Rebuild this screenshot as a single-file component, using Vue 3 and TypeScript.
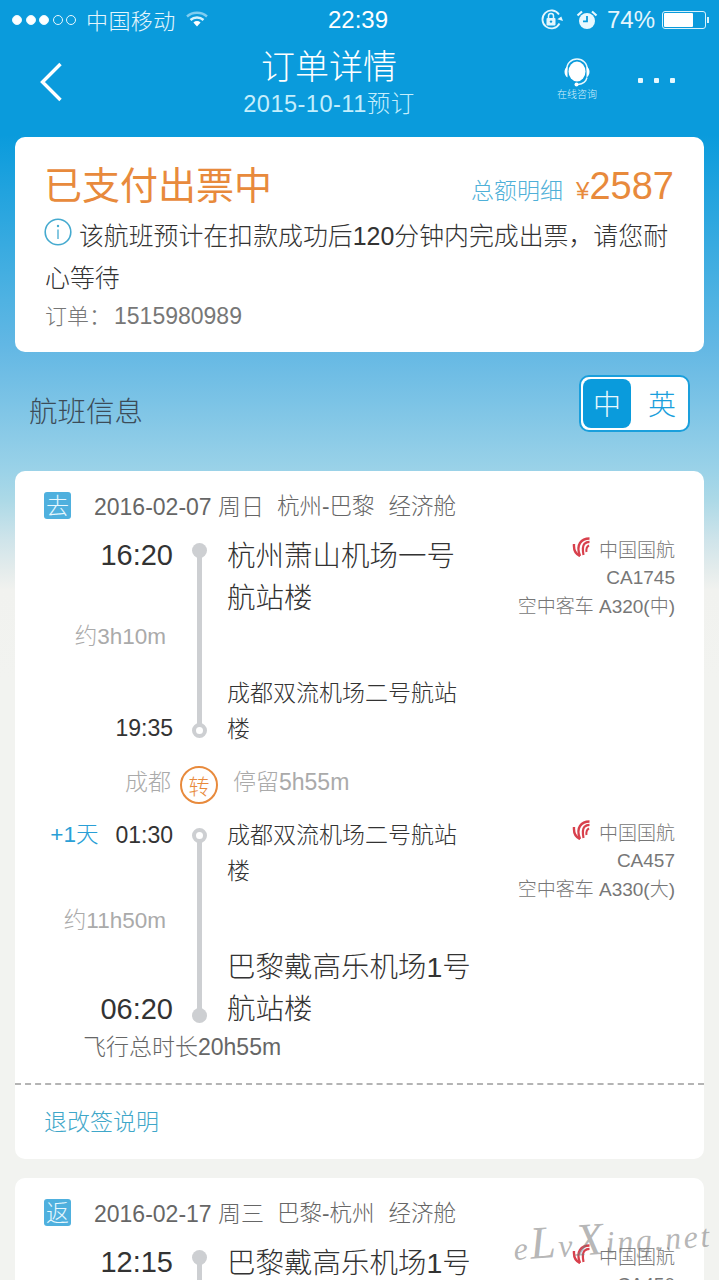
<script setup lang="ts">
interface Segment {
  kind: 'first' | 'second'
  dayShift?: string
  depart: string
  arrive: string
  duration: string
  from: string
  to: string
  flight: string
  plane: string
}
interface Trip {
  tag: string
  date: string
  week: string
  route: string
  cabin: string
  segments: Segment[]
}

const outbound: Trip = {
  tag: '去',
  date: '2016-02-07',
  week: '周日',
  route: '杭州-巴黎',
  cabin: '经济舱',
  segments: [
    {
      kind: 'first',
      depart: '16:20',
      arrive: '19:35',
      duration: '约3h10m',
      from: '杭州萧山机场一号航站楼',
      to: '成都双流机场二号航站楼',
      flight: 'CA1745',
      plane: '空中客车 A320(中)',
    },
    {
      kind: 'second',
      dayShift: '+1天',
      depart: '01:30',
      arrive: '06:20',
      duration: '约11h50m',
      from: '成都双流机场二号航站楼',
      to: '巴黎戴高乐机场1号航站楼',
      flight: 'CA457',
      plane: '空中客车 A330(大)',
    },
  ],
}
</script>

<template>
  <div class="page">
    <header class="top">
      <div class="status">
        <div class="signal">
          <i class="on"></i><i class="on"></i><i class="on"></i><i></i><i></i>
        </div>
        <span class="carrier">中国移动</span>
        <svg class="wifi" width="22" height="16" viewBox="0 0 22 16">
          <path d="M1 5.500C6.500 .5 15.500 .5 21 5.500" fill="none" stroke="#7fcdf0" stroke-width="2.400" />
          <path d="M4.500 9C8.200 5.600 13.800 5.600 17.500 9" fill="none" stroke="#d8f2fc" stroke-width="2.400" />
          <path d="M7.400 11.400C9.600 9.600 12.400 9.600 14.600 11.400L11 15.400Z" fill="#fff" />
        </svg>
        <span class="clock">22:39</span>
        <div class="status-right">
          <svg width="24" height="24" viewBox="0 0 24 24">
            <path d="M19.500 15.500A9 9 0 1 1 19 6.500" fill="none" stroke="#e4f6fd" stroke-width="1.800" />
            <path d="M17.500 12h6l-3-3.800z" fill="#e4f6fd" transform="rotate(18 20 11)" />
            <rect x="6.500" y="10" width="9" height="7.500" rx="1" fill="#e4f6fd" />
            <path d="M8.500 10V8a2.500 2.500 0 0 1 5 0v2" fill="none" stroke="#e4f6fd" stroke-width="1.500" />
            <circle cx="11" cy="13.600" r="1.200" fill="#0a9bdc" />
          </svg>
          <svg class="alarm" width="22" height="22" viewBox="0 0 22 22">
            <circle cx="11" cy="12" r="8" fill="#e8f8fe" />
            <path d="M11 7v5.400h-4" fill="none" stroke="#0a9bdc" stroke-width="1.800" />
            <path d="M1.500 6.500 6 2.500M20.500 6.500 16 2.500" stroke="#e8f8fe" stroke-width="2.200" />
          </svg>
          <span class="percent">74%</span>
          <div class="battery"><div class="battery-level"></div></div>
          <i class="battery-tip"></i>
        </div>
      </div>
      <nav class="nav">
        <svg class="back" width="26" height="42" viewBox="0 0 26 42">
          <path d="M21.500 3 3.500 21 21.500 39" fill="none" stroke="#fff" stroke-width="3.400" />
        </svg>
        <div class="titles">
          <h1>订单详情</h1>
          <p>2015-10-11预订</p>
        </div>
        <div class="consult">
          <svg width="32" height="30" viewBox="0 0 32 30">
            <path d="M5.500 12.500C5.500 5 10.500 1 16 1S26.500 5 26.500 12.500" fill="none" stroke="#e8f8fe" stroke-width="1.500" />
            <ellipse cx="16" cy="13.500" rx="8.500" ry="10" fill="#fff" />
            <path d="M6.500 8.500C2.500 10.500 2.500 17 6.500 19.500ZM25.500 8.500C29.500 10.500 29.500 17 25.500 19.500Z" fill="#fff" />
            <path d="M26 19.500C25 24 21 26 17 26.500" fill="none" stroke="#e8f8fe" stroke-width="1.400" />
            <circle cx="15.500" cy="26.500" r="2" fill="#fff" />
          </svg>
          <span>在线咨询</span>
        </div>
        <div class="more"><i></i><i></i><i></i></div>
      </nav>
    </header>

    <section class="card summary">
      <div class="summary-head">
        <h2>已支付出票中</h2>
        <a class="detail">总额明细</a>
        <span class="price"><small>¥</small>2587</span>
      </div>
      <p class="notice">
        <svg class="info" width="28" height="28" viewBox="0 0 28 28">
          <circle cx="14" cy="14" r="12.800" fill="none" stroke="#45aacf" stroke-width="1.600" />
          <circle cx="14" cy="8" r="1.200" fill="#45aacf" />
          <path d="M14 11.500V21" stroke="#45aacf" stroke-width="1.300" />
        </svg>
        该航班预计在扣款成功后120分钟内完成出票，请您耐心等待
      </p>
      <p class="order-no">订单：<span>1515980989</span></p>
    </section>

    <div class="section-head">
      <h3>航班信息</h3>
      <div class="lang">
        <span class="lang-on">中</span>
        <span class="lang-off">英</span>
      </div>
    </div>

    <section class="card trip">
      <div class="trip-head">
        <span class="tag">{{ outbound.tag }}</span>
        <span class="trip-date">{{ outbound.date }} {{ outbound.week }}</span>
        <span>{{ outbound.route }}</span>
        <span>{{ outbound.cabin }}</span>
      </div>

      <template v-for="(seg, i) in outbound.segments" :key="seg.flight">
        <div class="seg" :class="`seg-${seg.kind}`">
          <div class="times">
            <div class="time time-depart">
              <span v-if="seg.dayShift" class="shift">{{ seg.dayShift }}</span>{{ seg.depart }}
            </div>
            <div class="duration">{{ seg.duration }}</div>
            <div class="time time-arrive">{{ seg.arrive }}</div>
          </div>
          <div class="track">
            <i class="dot" :class="seg.kind === 'first' ? 'solid' : 'ring'"></i>
            <i class="line"></i>
            <i class="dot" :class="seg.kind === 'first' ? 'ring' : 'solid'"></i>
          </div>
          <div class="names">
            <div class="name name-from">{{ seg.from }}</div>
            <div class="name name-to">{{ seg.to }}</div>
          </div>
          <div class="airline">
            <div class="carrier-line">
              <svg width="18" height="20" viewBox="0 0 18 20">
                <path d="M2 7C1.500 13 3.500 17 8 19" fill="none" stroke="#d8404c" stroke-width="2.400" />
                <path d="M8 19C6 14 6 9 8 6 10 3 13 1.500 17.500 1.500" fill="none" stroke="#d8404c" stroke-width="2.400" />
                <path d="M11.500 18C10.500 13 10.500 9 12.500 6.800 13.800 5.400 15.500 4.800 17.500 4.800" fill="none" stroke="#d8404c" stroke-width="2.200" />
                <path d="M14.500 15C14 12 14.500 9.800 17 8.300" fill="none" stroke="#d8404c" stroke-width="2" />
              </svg>
              <span>中国国航</span>
            </div>
            <div>{{ seg.flight }}</div>
            <div>{{ seg.plane }}</div>
          </div>
        </div>
        <div v-if="i === 0" class="transfer">
          <span class="transfer-city">成都</span>
          <span class="transfer-mark">转</span>
          <span class="transfer-stay">停留5h55m</span>
        </div>
      </template>

      <div class="total">飞行总时长20h55m</div>
      <div class="rules">退改签说明</div>
    </section>

    <section class="card trip trip-return">
      <div class="trip-head">
        <span class="tag">返</span>
        <span class="trip-date">2016-02-17 周三</span>
        <span>巴黎-杭州</span>
        <span>经济舱</span>
      </div>
      <div class="seg seg-first">
        <div class="times">
          <div class="time time-depart">12:15</div>
        </div>
        <div class="track">
          <i class="dot solid"></i>
          <i class="line"></i>
        </div>
        <div class="names">
          <div class="name name-from">巴黎戴高乐机场1号航站楼</div>
        </div>
        <div class="airline">
          <div class="carrier-line">
            <svg width="18" height="20" viewBox="0 0 18 20">
              <path d="M2 7C1.500 13 3.500 17 8 19" fill="none" stroke="#d8404c" stroke-width="2.400" />
              <path d="M8 19C6 14 6 9 8 6 10 3 13 1.500 17.500 1.500" fill="none" stroke="#d8404c" stroke-width="2.400" />
              <path d="M11.500 18C10.500 13 10.500 9 12.500 6.800 13.800 5.400 15.500 4.800 17.500 4.800" fill="none" stroke="#d8404c" stroke-width="2.200" />
            </svg>
            <span>中国国航</span>
          </div>
          <div>CA450</div>
        </div>
      </div>
    </section>

    <div class="watermark">e<b>L</b>v<b>X</b>ing.net</div>
  </div>
</template>

<style>
html,
body {
  margin: 0;
  background: #f2f3f0;
}
</style>

<style scoped>
.page {
  position: relative;
  width: 719px;
  height: 1280px;
  overflow: hidden;
  font-family: "Liberation Sans", "Noto Sans CJK SC", sans-serif;
  font-weight: 300;
  color: #333;
  background: linear-gradient(
    180deg,
    #0a9bdc 0,
    #0a9bdc 135px,
    #4fb2e2 300px,
    #62b7e4 345px,
    #9ad2e8 470px,
    #acd9e7 500px,
    #cfe4ea 540px,
    #e4ecec 570px,
    #f1f2ef 590px,
    #f2f3f0 680px
  );
}
h1, h2, h3, p { margin: 0; font-weight: inherit; }
i { display: block; }

.top { height: 137px; color: #fff; }
.status {
  height: 40px;
  display: flex;
  align-items: center;
  padding-left: 12px;
  font-size: 22px;
  color: #e4f6fd;
}
.signal { display: flex; gap: 3.500px; width: 74px; }
.signal i {
  width: 10px;
  height: 10px;
  box-sizing: border-box;
  border: 1px solid #e8f8fe;
  border-radius: 50%;
}
.signal i.on { background: #fff; }
.carrier { width: 100px; letter-spacing: 0.400px; margin-top: -3px; }
.wifi { width: 22px; margin-top: -2px; }
.clock {
  margin-left: 120px;
  width: 70px;
  font-size: 24px;
  font-weight: 500;
  color: #fff;
  font-family: "Liberation Sans", sans-serif;
}
.status-right {
  margin-left: 142px;
  display: flex;
  align-items: center;
}
.alarm { margin-left: 12px; }
.percent { margin-left: 9px; font-size: 24px; width: 55px; }
.battery {
  width: 44px;
  height: 18px;
  box-sizing: border-box;
  border: 1px solid #d8f2fc;
  border-radius: 3px;
  padding: 1px;
}
.battery-level { width: 29px; height: 14px; background: #fff; border-radius: 1px; }
.battery-tip { width: 2px; height: 6px; margin-left: 1px; background: #d8f2fc; }

.nav {
  height: 97px;
  display: flex;
  align-items: flex-start;
}
.back { margin: 21px 0 0 39px; }
.titles {
  width: 200px;
  margin-left: 164px;
  text-align: center;
}
.titles h1 { font-size: 34px; line-height: 44px; margin-top: 5px; }
.titles p { font-size: 23.500px; line-height: 30px; color: #c4eefc; letter-spacing: 0.500px; }
.consult {
  width: 44px;
  margin-left: 126px;
  margin-top: 18px;
  display: flex;
  flex-direction: column;
  align-items: center;
}
.consult span { font-size: 10px; line-height: 12px; color: #d8f2fc; white-space: nowrap; margin-top: 1px; }
.more { display: flex; gap: 11px; margin: 38px 0 0 39px; }
.more i { width: 5px; height: 5px; background: #e8f8fe; border-radius: 1px; }

.card {
  margin: 0 15px;
  background: #fff;
  border-radius: 10px;
}
.summary { height: 215px; box-sizing: border-box; padding: 25px 30px 0; }
.summary-head { display: flex; align-items: baseline; height: 48px; }
.summary-head h2 { font-size: 38px; line-height: 48px; color: #e88a3c; font-weight: 400; margin-left: -1px; }
.detail { margin-left: auto; font-size: 23px; color: #4fb0d8; }
.price { margin-left: 13px; font-size: 38px; line-height: 48px; color: #e88a3c; font-weight: 400; }
.price small { font-size: 24px; }
.notice {
  font-size: 24.900px;
  line-height: 42px;
  margin-top: 5px;
  color: #333;
  width: 630px;
}
.info { vertical-align: -1px; margin: 0 0 0 -1px; }
.order-no { font-size: 22px; line-height: 34px; color: #777; }
.order-no span { font-size: 23px; margin-left: 3px; }

.section-head {
  height: 119px;
  display: flex;
  align-items: center;
  justify-content: space-between;
  padding: 0 29px;
}
.section-head h3 { font-size: 28.500px; color: #3c4c58; margin-top: -4px; }
.lang {
  width: 111px;
  height: 57px;
  margin-top: -17px;
  box-sizing: border-box;
  border: 2px solid #1a9fdc;
  border-radius: 10px;
  background: #fff;
  padding: 2px;
  display: flex;
  align-items: stretch;
  font-size: 28px;
}
.lang span { display: flex; align-items: center; justify-content: center; }
.lang-on { width: 48px; background: #0a9bdc; color: #e8f8fe; border-radius: 8px; }
.lang-off { flex: 1; color: #1a9fdc; padding-left: 7px; }

.trip { height: 688px; }
.trip-return { margin-top: 19px; height: 200px; }
.trip-head {
  height: 63px;
  box-sizing: border-box;
  padding: 21px 0 0 29px;
  display: flex;
  gap: 14px;
  align-items: flex-start;
  font-size: 22.500px;
  line-height: 30px;
  color: #666;
}
.trip-head .trip-date { margin-left: 9px; margin-right: -1px; font-size: 23px; }
.tag {
  width: 27px;
  height: 27px;
  background: #4fb0de;
  color: #e8f8fe;
  border-radius: 3px;
  display: flex;
  align-items: center;
  justify-content: center;
  font-size: 23px;
}
.seg {
  height: 213px;
  display: grid;
  grid-template-columns: 158px 52px 250px 1fr;
  padding-right: 29px;
}
.times {
  display: flex;
  flex-direction: column;
  align-items: flex-end;
  justify-content: space-between;
}
.time { display: flex; align-items: center; white-space: nowrap; }
.time-depart, .time-arrive { font-size: 23px; line-height: 36px; }
.seg-first .time-depart { font-size: 29px; line-height: 42px; }
.seg-second .time-arrive { font-size: 29px; line-height: 42px; }
.seg-first .time-arrive { margin-bottom: 1px; }
.shift { font-size: 22.500px; color: #2a9fd6; margin-right: 17px; }
.duration { font-size: 22.500px; color: #aaa; padding-right: 7px; }
.seg-first .duration { margin-bottom: 18px; }
.seg-second .duration { margin-bottom: 6px; }

.track {
  display: flex;
  flex-direction: column;
  align-items: center;
  padding: 9px 0;
  box-sizing: border-box;
}
.seg-second .track { padding: 11px 0 7px; }
.dot { width: 15px; height: 15px; flex: none; border-radius: 50%; box-sizing: border-box; }
.dot.solid { background: #cdcfd2; }
.dot.ring { border: 4px solid #cdcfd2; background: #fff; }
.line { flex: 1; width: 5px; background: #cdcfd2; margin: -1px 0; }

.names {
  padding-left: 2px;
  display: flex;
  flex-direction: column;
  justify-content: space-between;
}
.seg-first .name-from, .seg-second .name-to { font-size: 28.500px; line-height: 42px; }
.seg-first .name-from { margin-top: 1px; }
.seg-first .name-to, .seg-second .name-from { font-size: 23px; line-height: 36px; }

.airline { text-align: right; font-size: 19px; line-height: 29px; color: #777; }
.carrier-line { display: flex; justify-content: flex-end; align-items: center; gap: 9px; height: 29px; }
.carrier-line span { padding-top: 3px; }
.carrier-line svg { margin-top: -4px; }

.transfer {
  height: 70px;
  display: grid;
  grid-template-columns: 158px 52px 1fr;
  align-items: center;
  font-size: 23px;
  color: #aaa;
}
.transfer-city { text-align: right; padding-right: 2px; margin-bottom: 4px; }
.transfer-mark {
  justify-self: center;
  width: 38px;
  height: 38px;
  box-sizing: border-box;
  margin-top: 6px;
  border: 2px solid #e88a3c;
  border-radius: 50%;
  color: #e88a3c;
  display: flex;
  align-items: center;
  justify-content: center;
  font-size: 21px;
}
.transfer-stay { padding-left: 8px; margin-bottom: 4px; }

.total {
  height: 55px;
  box-sizing: border-box;
  padding-left: 68px;
  font-size: 23px;
  line-height: 34px;
  color: #666;
  border-bottom: 2px dashed #b4b4b4;
}
.rules {
  padding: 19px 0 0 29px;
  font-size: 23px;
  line-height: 36px;
  color: #3fa7c9;
}
.watermark {
  position: absolute;
  left: 515px;
  top: 1218px;
  font-family: "Liberation Serif", serif;
  font-style: italic;
  font-size: 32px;
  letter-spacing: 2.600px;
  color: rgba(120, 120, 120, 0.55);
  transform: rotate(-4deg);
  transform-origin: left bottom;
}
.watermark b { font-size: 46px; font-weight: 400; }
</style>
